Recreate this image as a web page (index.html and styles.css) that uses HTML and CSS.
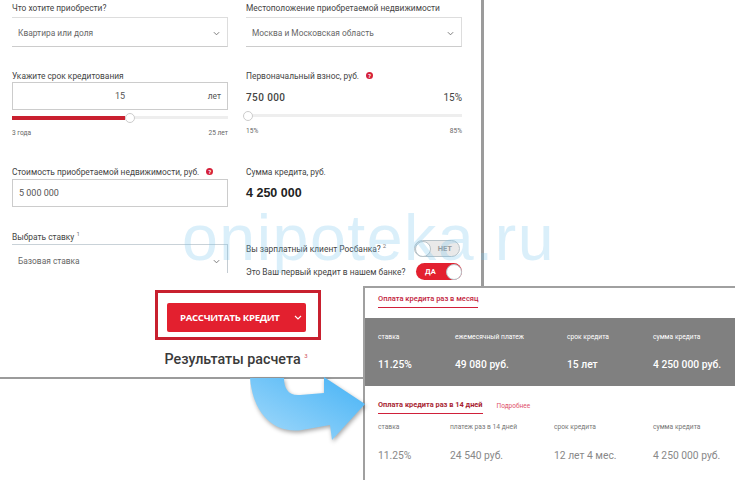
FILE: index.html
```html
<!DOCTYPE html>
<html lang="ru">
<head>
    <meta charset="UTF-8">
    <title>Расчет кредита</title>
    <link rel="stylesheet" href="styles.css">
</head>
<body>
    <div class="shot">
        <div class="calc">
            <div class="form-grid">
                <div class="field">
                    <label>Что хотите приобрести?</label>
                    <div class="select"><span>Квартира или доля</span><svg class="chev" viewBox="0 0 8 5"><path d="M1 1l3 3 3-3"/></svg></div>
                </div>
                <div class="field">
                    <label>Местоположение приобретаемой недвижимости</label>
                    <div class="select"><span>Москва и Московская область</span><svg class="chev" viewBox="0 0 8 5"><path d="M1 1l3 3 3-3"/></svg></div>
                </div>
                <div class="field">
                    <label>Укажите срок кредитования</label>
                    <div class="input input-term"><span class="term-value">15</span><span class="term-unit">лет</span></div>
                    <div class="slider"><div class="slider-fill fill-term"></div><div class="slider-knob knob-term"></div></div>
                    <div class="legend"><span>3 года</span><span>25 лет</span></div>
                </div>
                <div class="field">
                    <label>Первоначальный взнос, руб. <i class="hint">?</i></label>
                    <div class="amount-row"><b>750 000</b><span>15%</span></div>
                    <div class="slider"><div class="slider-knob knob-start"></div></div>
                    <div class="legend"><span>15%</span><span>85%</span></div>
                </div>
                <div class="field">
                    <label>Стоимость приобретаемой недвижимости, руб. <i class="hint">?</i></label>
                    <div class="input"><span>5 000 000</span></div>
                </div>
                <div class="field">
                    <label>Сумма кредита, руб.</label>
                    <div class="sum">4 250 000</div>
                </div>
                <div class="field">
                    <label>Выбрать ставку <sup>1</sup></label>
                    <div class="select select-open"><span>Базовая ставка</span><svg class="chev" viewBox="0 0 8 5"><path d="M1 1l3 3 3-3"/></svg></div>
                </div>
                <div class="field toggles">
                    <div class="toggle-row">
                        <span>Вы зарплатный клиент Росбанка? <sup>2</sup></span>
                        <div class="toggle toggle-off"><i></i><span>НЕТ</span></div>
                    </div>
                    <div class="toggle-row">
                        <span>Это Ваш первый кредит в нашем банке?</span>
                        <div class="toggle toggle-on"><span>ДА</span><i></i></div>
                    </div>
                </div>
            </div>
            <div class="action">
                <div class="action-frame">
                    <button class="calc-button">
                        <span>РАССЧИТАТЬ КРЕДИТ</span>
                        <svg class="chev chev-white" viewBox="0 0 8 5"><path d="M1 1l3 3 3-3"/></svg>
                    </button>
                </div>
                <h2>Результаты расчета <sup>3</sup></h2>
            </div>
        </div>

        <div class="results">
            <div class="tab-row tab-row-first"><span class="tab">Оплата кредита раз в месяц</span></div>
            <div class="band">
                <div class="cols cols-month">
                    <span>ставка</span><span>ежемесячный платеж</span><span>срок кредита</span><span>сумма кредита</span>
                </div>
                <div class="cols cols-month values">
                    <span>11.25%</span><span>49 080 руб.</span><span>15 лет</span><span>4 250 000 руб.</span>
                </div>
            </div>
            <div class="plain">
                <div class="tab-row"><span class="tab tab-bold">Оплата кредита раз в 14 дней</span><a class="more">Подробнее</a></div>
                <div class="cols cols-days">
                    <span>ставка</span><span>платеж раз в 14 дней</span><span>срок кредита</span><span>сумма кредита</span>
                </div>
                <div class="cols cols-days values">
                    <span>11.25%</span><span>24 540 руб.</span><span>12 лет 4 мес.</span><span>4 250 000 руб.</span>
                </div>
            </div>
        </div>

        <svg class="arrow" viewBox="0 0 125 75">
            <defs>
                <linearGradient id="arrowFill" x1="0" y1="1" x2="1" y2="0">
                    <stop offset="0" stop-color="#a6dbfb"/>
                    <stop offset="1" stop-color="#45b2f5"/>
                </linearGradient>
            </defs>
            <path class="arrow-shape" d="M0 2H34C34 12 38 20 50 19L74 17V1L115 28 82 64 80 49 52 54C24 58 3 38 0 2Z"/>
        </svg>

        <div class="watermark">onipoteka.ru</div>
    </div>
</body>
</html>
```

FILE: styles.css
```css
* {
    box-sizing: border-box;
}

body {
    margin: 0;
    background: #fff;
    font-family: Roboto, "Open Sans", sans-serif;
    color: #444;
}

.shot {
    position: relative;
    width: 735px;
    height: 480px;
    overflow: hidden;
    background: #fff;
}

/* left window */
.calc {
    position: absolute;
    left: 0;
    top: 0;
    width: 484px;
    height: 379px;
    border-right: 3px solid #9b9b9b;
    border-bottom: 2px solid #9b9b9b;
    padding: 0 0 0 12px;
}

.form-grid {
    display: grid;
    grid-template-columns: 216px 216px;
    grid-template-rows: 68px 96px 65px 46px;
    column-gap: 18px;
    height: 275px;
}

.field label {
    display: block;
    height: 17px;
    font-size: 8.4px;
    line-height: 17px;
    color: #444;
    white-space: nowrap;
}

.field:nth-child(n+3) label {
    height: 15px;
}

.select {
    display: flex;
    align-items: center;
    justify-content: space-between;
    height: 30px;
    padding: 2px 7px 0 6px;
    border-top: 1px solid #ddd;
    border-right: 1px solid #ddd;
    border-bottom: 1px solid #ccc;
    font-size: 8.4px;
    color: #666;
}

.select-open {
    height: 29px;
    padding-top: 4px;
    border-top-color: #c9d2d8;
    border-right-color: #c4ccd2;
    border-bottom: none;
}

.chev {
    width: 7px;
    height: 5px;
    fill: none;
    stroke: #777;
    stroke-width: 1.1;
}

.chev-white {
    width: 8px;
    stroke: #fff;
}

.input {
    display: flex;
    align-items: center;
    height: 28px;
    padding: 0 6px;
    border: 1px solid #ccc;
    font-size: 9px;
    color: #555;
}

.input-term {
    position: relative;
    margin-top: -1px;
    justify-content: space-between;
    padding: 0 6px 0 0;
}

.term-value {
    width: 112px;
    text-align: right;
}

.term-unit {
    font-size: 8.4px;
}

.slider {
    position: relative;
    height: 3px;
    margin-top: 6px;
    background: #eee;
}

.slider-fill {
    height: 4px;
    background: #c9202f;
}

.fill-term {
    width: 113px;
}

.slider-knob {
    position: absolute;
    top: -3px;
    width: 10px;
    height: 10px;
    border-radius: 50%;
    border: 1px solid #ccc;
    background: #fff;
}

.knob-term {
    left: 113px;
}

.knob-start {
    left: -3px;
}

.legend {
    display: flex;
    justify-content: space-between;
    margin-top: 10px;
    font-size: 6.6px;
    color: #666;
}

.hint {
    display: inline-block;
    width: 7px;
    height: 7px;
    margin-left: 5px;
    border-radius: 50%;
    background: #d5213a;
    color: #fff;
    font-size: 6px;
    font-style: normal;
    font-weight: 700;
    line-height: 7px;
    text-align: center;
    vertical-align: 1px;
}

.amount-row {
    display: flex;
    justify-content: space-between;
    align-items: center;
    height: 22px;
    margin-top: 3px;
    margin-bottom: 6px;
    font-size: 10px;
    color: #444;
}

.amount-row b {
    font-weight: 500;
    letter-spacing: 0.4px;
}

.sum {
    margin-top: 7px;
    font-family: "Liberation Sans", sans-serif;
    font-size: 12.5px;
    font-weight: 700;
    color: #222;
}

sup {
    font-size: 6px;
    line-height: 0;
    color: #777;
}

.toggles {
    display: flex;
    flex-direction: column;
    gap: 6px;
    padding-top: 11px;
    font-size: 8.4px;
    white-space: nowrap;
}

.toggle-row {
    display: flex;
    align-items: center;
    justify-content: space-between;
    height: 17px;
}

.toggle {
    display: flex;
    align-items: center;
    justify-content: space-between;
    width: 46px;
    height: 17px;
    border-radius: 9px;
    font-size: 7.5px;
    font-weight: 700;
}

.toggle i {
    width: 16px;
    height: 16px;
    border-radius: 50%;
    background: #fff;
    border: 1px solid #b7c2c8;
}

.toggle-off {
    margin-right: 2px;
    background: #e9e9e9;
    border: 1px solid #b7c2c8;
    padding-right: 7px;
    color: #999;
}

.toggle-on {
    background: #e3202f;
    padding-left: 9px;
    color: #fff;
}

.action {
    display: flex;
    flex-direction: column;
    align-items: center;
    width: 473px;
    padding-top: 15px;
}

.action-frame {
    width: 166px;
    height: 50px;
    padding: 10px 9px;
    border: 3px solid #c8202f;
    background: #fff;
    margin-left: -21px;
}

.calc-button {
    display: flex;
    align-items: center;
    justify-content: space-between;
    width: 139px;
    height: 29px;
    padding: 0 4px 0 13px;
    border: none;
    border-radius: 2px;
    background: #e3202f;
    color: #fff;
    font-family: "Open Sans", sans-serif;
    font-size: 9.6px;
    font-weight: 700;
    letter-spacing: -0.3px;
}

.action h2 {
    margin: 9px 0 0 -25px;
    font-size: 14.3px;
    font-weight: 500;
    line-height: 20px;
    color: #3a3a3a;
}

.action h2 sup {
    color: #d0505c;
    font-weight: 400;
}

/* right window */
.results {
    position: absolute;
    left: 363px;
    top: 286px;
    width: 372px;
    height: 194px;
    border-left: 2px solid #a0a0a0;
    border-top: 2px solid #a0a0a0;
    background: #fff;
}

.tab-row {
    display: flex;
    gap: 14px;
    align-items: flex-start;
    padding: 5px 0 0 13px;
    font-size: 7.5px;
}

.tab-row-first {
    height: 30px;
}

.tab {
    padding-bottom: 2px;
    border-bottom: 1px solid #d0203a;
    color: #c2233c;
    font-weight: 500;
    line-height: 12px;
}

.tab-bold {
    font-size: 7.4px;
    font-weight: 700;
    color: #a81f33;
}

.more {
    padding-top: 3px;
    font-size: 6.5px;
    color: #e0506a;
}

.band {
    height: 68px;
    padding-top: 14px;
    background: #808080;
    color: #fff;
}

.cols {
    display: grid;
    padding-left: 13px;
    font-size: 6.7px;
    line-height: 10px;
    white-space: nowrap;
}

.cols-month {
    grid-template-columns: 77px 112px 86px 1fr;
}

.cols-days {
    grid-template-columns: 72px 104px 99px 1fr;
    color: #777;
}

.cols.values {
    margin-top: 16px;
    font-size: 10.3px;
    line-height: 14px;
}

.band .values {
    font-weight: 500;
}

.plain {
    padding-top: 8px;
}

.plain .cols {
    margin-top: 8px;
}

.plain .cols.values {
    margin-top: 17px;
    color: #888;
}

/* pasted over the screenshot */
.arrow {
    position: absolute;
    left: 250px;
    top: 376px;
    width: 125px;
    height: 75px;
}

.arrow-shape {
    fill: url(#arrowFill);
    filter: drop-shadow(1px 2px 2px rgba(0, 0, 0, 0.35));
}

.watermark {
    position: absolute;
    left: 182px;
    top: 198px;
    font-family: "Liberation Sans", sans-serif;
    font-size: 64.5px;
    letter-spacing: 1.5px;
    line-height: 80px;
    color: rgba(120, 195, 235, 0.27);
    white-space: nowrap;
    pointer-events: none;
}
```
